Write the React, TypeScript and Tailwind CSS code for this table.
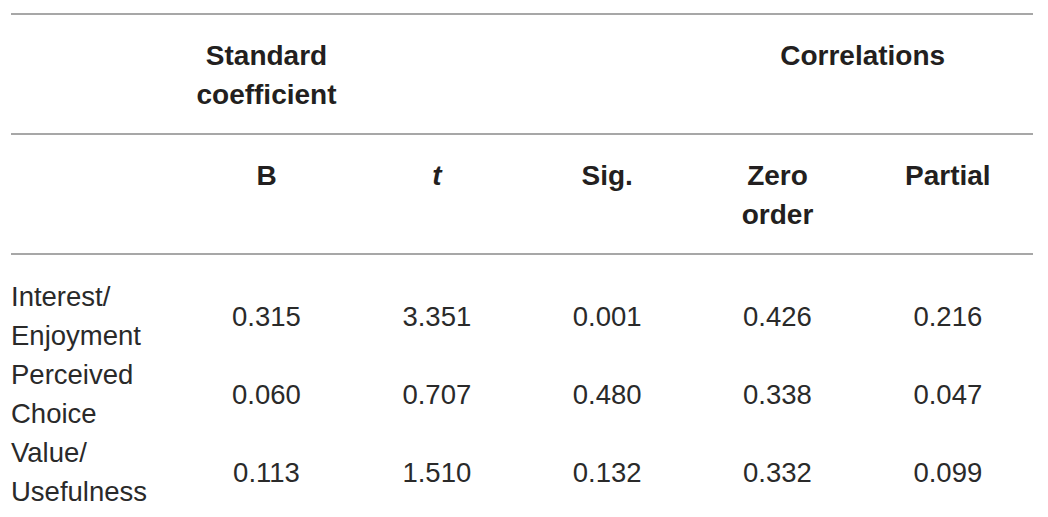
import React from "react";

type Row = {
  label: [string, string];
  values: string[];
};

const rows: Row[] = [
  { label: ["Interest/", "Enjoyment"], values: ["0.315", "3.351", "0.001", "0.426", "0.216"] },
  { label: ["Perceived", "Choice"], values: ["0.060", "0.707", "0.480", "0.338", "0.047"] },
  { label: ["Value/", "Usefulness"], values: ["0.113", "1.510", "0.132", "0.332", "0.099"] },
];

const App = () => {
  return (
    <div
      className="w-[1048px] h-[517px] bg-white pt-[13px] pl-[11px] text-[#231f20]"
      style={{ fontFamily: '"Liberation Sans", Arial, sans-serif' }}
    >
      <div className="w-[1022px] border-t-2 border-[#a7a7a7]">
        {/* group headings */}
        <div className="grid grid-cols-6 h-[120px] pt-[21px] border-b-2 border-[#a7a7a7] text-[28px] leading-[39px] font-bold text-center">
          <div />
          <div className="whitespace-nowrap">
            Standard
            <br />
            coefficient
          </div>
          <div />
          <div />
          <div className="col-span-2">Correlations</div>
        </div>

        {/* column headings */}
        <div className="grid grid-cols-6 h-[120px] pt-[21px] border-b-2 border-[#a7a7a7] text-[28px] leading-[39px] font-bold text-center">
          <div />
          <div>B</div>
          <div className="italic">t</div>
          <div>Sig.</div>
          <div>
            Zero
            <br />
            order
          </div>
          <div>Partial</div>
        </div>

        {/* data */}
        <div className="pt-[22px] text-[27.5px] leading-[39px] text-[#2a2a2a]">
          {rows.map((r, i) => (
            <div key={i} className="grid grid-cols-6 h-[78px] items-center">
              <div className="text-left">
                {r.label[0]}
                <br />
                {r.label[1]}
              </div>
              {r.values.map((v, j) => (
                <div key={j} className="text-center">
                  {v}
                </div>
              ))}
            </div>
          ))}
        </div>
      </div>
    </div>
  );
};

export default App;
